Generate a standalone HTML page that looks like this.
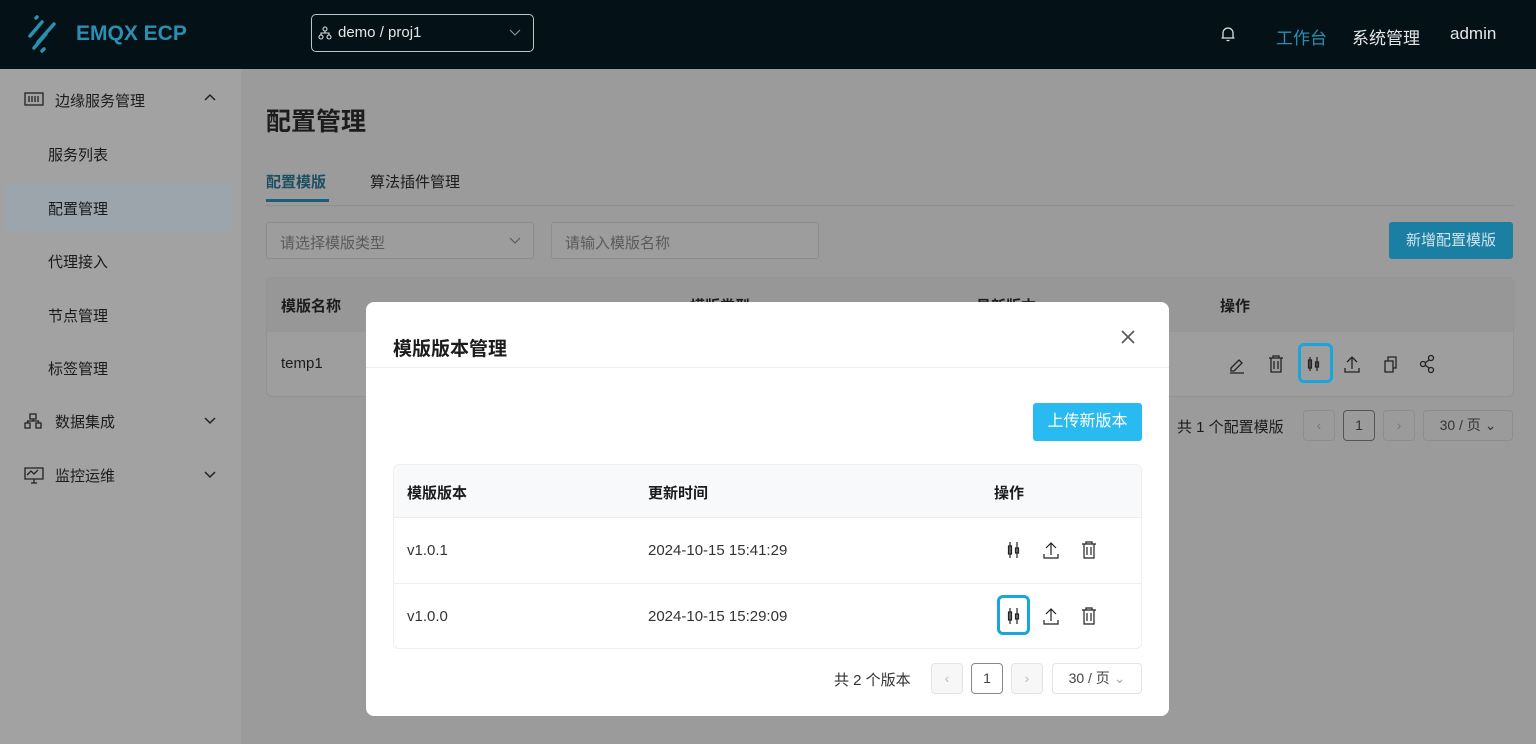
<!DOCTYPE html>
<html><head><meta charset="utf-8"><style>
*{box-sizing:border-box;margin:0;padding:0}
body{width:1536px;height:744px;overflow:hidden;font-family:"Liberation Sans","Noto Sans CJK SC",sans-serif;background:#9b9b9b;position:relative;color:#1c1c1c}
.hd{position:absolute;left:0;top:0;width:1536px;height:69px;background:#041218}
.side{position:absolute;left:0;top:69px;width:241px;height:675px;background:#a2a2a2}
.abs{position:absolute}
.mi{position:absolute;left:48px;font-size:15px;color:#1a1a1a}
.ico{stroke:#222;fill:none;stroke-width:1.3}
.modal{position:absolute;left:366px;top:302px;width:803px;height:414px;background:#fff;border-radius:8px}
.pg{position:absolute;border:1px solid #e3e3e3;border-radius:4px;height:31px;text-align:center;line-height:29px;font-size:14px;color:#444}
</style></head><body>
<div class="hd">
 <svg class="abs" style="left:26px;top:14px" width="36" height="40" viewBox="0 0 36 40"><g stroke="#2a8fb0" stroke-width="3.5" stroke-linecap="round"><line x1="4" y1="22" x2="16" y2="8"/><line x1="12" y1="28" x2="28" y2="10"/><line x1="8" y1="34" x2="20" y2="20"/><line x1="16" y1="37" x2="18" y2="35"/><line x1="10" y1="4" x2="11" y2="3"/></g></svg>
 <div class="abs" style="left:76px;top:22px;font-size:21px;font-weight:bold;color:#2a8fb0">EMQX ECP</div>
 <div class="abs" style="left:311px;top:14px;width:223px;height:38px;border:1.5px solid #bfc4c6;border-radius:5px"></div>
 <svg class="abs" style="left:318px;top:26px" width="14" height="14" viewBox="0 0 14 14"><g stroke="#ddd" fill="none" stroke-width="1.1"><circle cx="7" cy="3" r="2"/><circle cx="3" cy="11" r="2"/><circle cx="11" cy="11" r="2"/><path d="M7 5v2M3 9V7h8v2"/></g></svg>
 <div class="abs" style="left:338px;top:24px;font-size:15px;color:#e5e5e5">demo / proj1</div>
 <svg class="abs" style="left:508px;top:28px" width="14" height="10"><path d="M2 2l5 5 5-5" stroke="#999" fill="none"/></svg>
 <svg class="abs" style="left:1220px;top:25px" width="16" height="18" viewBox="0 0 16 18"><path d="M3 13V8a5 5 0 0110 0v5h1.5H1.5zM6.5 15.5h3" stroke="#ddd" fill="none" stroke-width="1.3"/></svg>
 <div class="abs" style="left:1276px;top:24px;font-size:17px;color:#2a8fb0">工作台</div>
 <div class="abs" style="left:1352px;top:24px;font-size:17px;color:#e5e5e5">系统管理</div>
 <div class="abs" style="left:1450px;top:24px;font-size:17px;color:#e5e5e5">admin</div>
</div>
<div class="side">
 <svg class="abs" style="left:24px;top:23px" width="20" height="14"><rect x="1" y="1" width="18" height="12" class="ico"/><path d="M5 4v6M8 4v6M11 4v6M14 4v6" class="ico"/></svg>
 <div class="abs" style="left:55px;top:21px;font-size:15px">边缘服务管理</div>
 <svg class="abs" style="left:203px;top:24px" width="14" height="10"><path d="M2 7l5-5 5 5" stroke="#222" fill="none" stroke-width="1.5"/></svg>
 <div class="mi" style="top:75px">服务列表</div>
 <div class="abs" style="left:4px;top:115px;width:229px;height:47px;background:#9ca5ab"></div>
 <div class="mi" style="top:129px">配置管理</div>
 <div class="mi" style="top:182px">代理接入</div>
 <div class="mi" style="top:236px">节点管理</div>
 <div class="mi" style="top:289px">标签管理</div>
 <svg class="abs" style="left:24px;top:344px" width="18" height="16"><path d="M6 1h6v5H6zM1 10h5v5H1zM12 10h5v5h-5zM9 6v2M3.5 10V8h11v2" class="ico"/></svg>
 <div class="abs" style="left:55px;top:342px;font-size:15px">数据集成</div>
 <svg class="abs" style="left:203px;top:347px" width="14" height="10"><path d="M2 2l5 5 5-5" stroke="#222" fill="none" stroke-width="1.5"/></svg>
 <svg class="abs" style="left:24px;top:397px" width="20" height="18"><path d="M1 2h18v11H1zM7 17h6M10 13v4M3 9l4-4 3 3 4-4" class="ico"/></svg>
 <div class="abs" style="left:55px;top:396px;font-size:15px">监控运维</div>
 <svg class="abs" style="left:203px;top:401px" width="14" height="10"><path d="M2 2l5 5 5-5" stroke="#222" fill="none" stroke-width="1.5"/></svg>
</div>
<div class="abs" style="left:266px;top:102px;font-size:25px;font-weight:bold">配置管理</div>
<div class="abs" style="left:266px;top:171px;font-size:15px;font-weight:bold;color:#1d4f63">配置模版</div>
<div class="abs" style="left:266px;top:199px;width:63px;height:3px;background:#1d5f7a"></div>
<div class="abs" style="left:370px;top:171px;font-size:15px">算法插件管理</div>
<div class="abs" style="left:266px;top:205px;width:1248px;height:1px;background:#8f8f8f"></div>
<div class="abs" style="left:266px;top:222px;width:268px;height:37px;border:1px solid #8d8d8d;background:#9d9d9d;border-radius:3px"></div>
<div class="abs" style="left:280px;top:232px;font-size:15px;color:#5a5a5a">请选择模版类型</div>
<svg class="abs" style="left:508px;top:236px" width="14" height="10"><path d="M2 2l5 5 5-5" stroke="#555" fill="none"/></svg>
<div class="abs" style="left:551px;top:222px;width:268px;height:37px;border:1px solid #8d8d8d;background:#9d9d9d;border-radius:3px"></div>
<div class="abs" style="left:565px;top:232px;font-size:15px;color:#5a5a5a">请输入模版名称</div>
<div class="abs" style="left:1389px;top:222px;width:124px;height:37px;background:#1a7fa3;border-radius:3px;color:#cfe2ea;font-size:15px;text-align:center;line-height:37px">新增配置模版</div>
<div class="abs" style="left:266px;top:277px;width:1248px;height:120px;border:1px solid #939393;border-radius:6px;background:#9e9e9e;overflow:hidden">
 <div style="height:54px;background:#979797"></div>
</div>
<div class="abs" style="left:281px;top:295px;font-size:15px;font-weight:bold">模版名称</div>
<div class="abs" style="left:690px;top:295px;font-size:15px;font-weight:bold">模版类型</div>
<div class="abs" style="left:976px;top:295px;font-size:15px;font-weight:bold">最新版本</div>
<div class="abs" style="left:1220px;top:295px;font-size:15px;font-weight:bold">操作</div>
<div class="abs" style="left:281px;top:355px;font-size:15px">temp1</div>
<svg class="abs" style="left:1228px;top:353px" width="220" height="22" viewBox="0 0 220 22">
 <g stroke="#222" fill="none" stroke-width="1.3">
 <path d="M3 15l8-8 3 3-8 8H3zM2 20h14"/>
 <path d="M41 5h14M45 5V3h6v2M43 5v14h10V5M46 8v8M50 8v8"/>
 <path d="M124 4v12M119 9l5-5 5 5M117 15v4h14v-4"/>
 <path d="M157 8h8v11h-8zM160 8V4h8v11h-3"/>
 <circle cx="195" cy="11" r="2.5"/><circle cx="203" cy="5" r="2.5"/><circle cx="203" cy="17" r="2.5"/><path d="M197 10l4-3M197 12l4 3"/>
 </g>
 <g stroke="#222" fill="none" stroke-width="1.2"><path d="M82 4v14M80.5 7h3v8h-3zM89 4v14M87.5 9h3v5h-3z"/></g>
</svg>
<div class="abs" style="left:1298px;top:343px;width:35px;height:40px;border:3px solid #1aa5dc;border-radius:6px"></div>
<div class="abs" style="left:1177px;top:416px;font-size:15px">共 1 个配置模版</div>
<div class="pg" style="left:1303px;top:410px;width:32px;border-color:#8e8e8e;color:#777">‹</div>
<div class="pg" style="left:1343px;top:410px;width:32px;border-color:#555;color:#333">1</div>
<div class="pg" style="left:1383px;top:410px;width:32px;border-color:#8e8e8e;color:#777">›</div>
<div class="pg" style="left:1423px;top:410px;width:90px;border-color:#8e8e8e;color:#333">30 / 页 ⌄</div>

<div class="modal">
 <div class="abs" style="left:27px;top:32px;font-size:19px;font-weight:bold">模版版本管理</div>
 <svg class="abs" style="left:754px;top:27px" width="16" height="16"><path d="M2 2l12 12M14 2L2 14" stroke="#555" stroke-width="1.6"/></svg>
 <div class="abs" style="left:0;top:65px;width:803px;height:1px;background:#eee"></div>
 <div class="abs" style="left:667px;top:101px;width:109px;height:38px;background:#28baf0;border-radius:3px;color:#fff;font-size:16px;text-align:center;line-height:38px">上传新版本</div>
 <div class="abs" style="left:27px;top:162px;width:749px;height:185px;border:1px solid #eee;border-radius:6px;overflow:hidden">
  <div style="height:53px;background:#f8f9fa;border-bottom:1px solid #eee"></div>
  <div style="height:66px;border-bottom:1px solid #eee"></div>
 </div>
 <div class="abs" style="left:41px;top:180px;font-size:15px;font-weight:bold">模版版本</div>
 <div class="abs" style="left:282px;top:180px;font-size:15px;font-weight:bold">更新时间</div>
 <div class="abs" style="left:628px;top:180px;font-size:15px;font-weight:bold">操作</div>
 <div class="abs" style="left:41px;top:240px;font-size:15px;color:#333">v1.0.1</div>
 <div class="abs" style="left:282px;top:240px;font-size:15px;color:#333">2024-10-15 15:41:29</div>
 <div class="abs" style="left:41px;top:306px;font-size:15px;color:#333">v1.0.0</div>
 <div class="abs" style="left:282px;top:306px;font-size:15px;color:#333">2024-10-15 15:29:09</div>
 <svg class="abs" style="left:636px;top:237px" width="100" height="100" viewBox="0 0 100 100">
  <g stroke="#222" fill="none" stroke-width="1.2">
   <path d="M8 3v16M6.5 7h3v8h-3zM15 3v16M13.5 9h3v5h-3z"/>
   <path d="M49 4v12M44 9l5-5 5 5M42 15v4h14v-4"/>
   <path d="M80 5h14M84 5V3h6v2M82 5v14h10V5M85 8v8M89 8v8"/>
   <g transform="translate(0,66)"><path d="M8 3v16M6.5 7h3v8h-3zM15 3v16M13.5 9h3v5h-3z"/>
   <path d="M49 4v12M44 9l5-5 5 5M42 15v4h14v-4"/>
   <path d="M80 5h14M84 5V3h6v2M82 5v14h10V5M85 8v8M89 8v8"/></g>
  </g>
 </svg>
 <div class="abs" style="left:631px;top:293px;width:33px;height:40px;border:3px solid #1aa5dc;border-radius:6px"></div>
 <div class="abs" style="left:468px;top:367px;font-size:15px;color:#333">共 2 个版本</div>
 <div class="pg" style="left:565px;top:361px;width:32px;background:#f7f7f7;color:#bbb">‹</div>
 <div class="pg" style="left:605px;top:361px;width:32px;border-color:#888">1</div>
 <div class="pg" style="left:645px;top:361px;width:32px;background:#f7f7f7;color:#bbb">›</div>
 <div class="pg" style="left:686px;top:361px;width:90px">30 / 页 <span style="color:#aaa">⌄</span></div>
</div>
</body></html>
